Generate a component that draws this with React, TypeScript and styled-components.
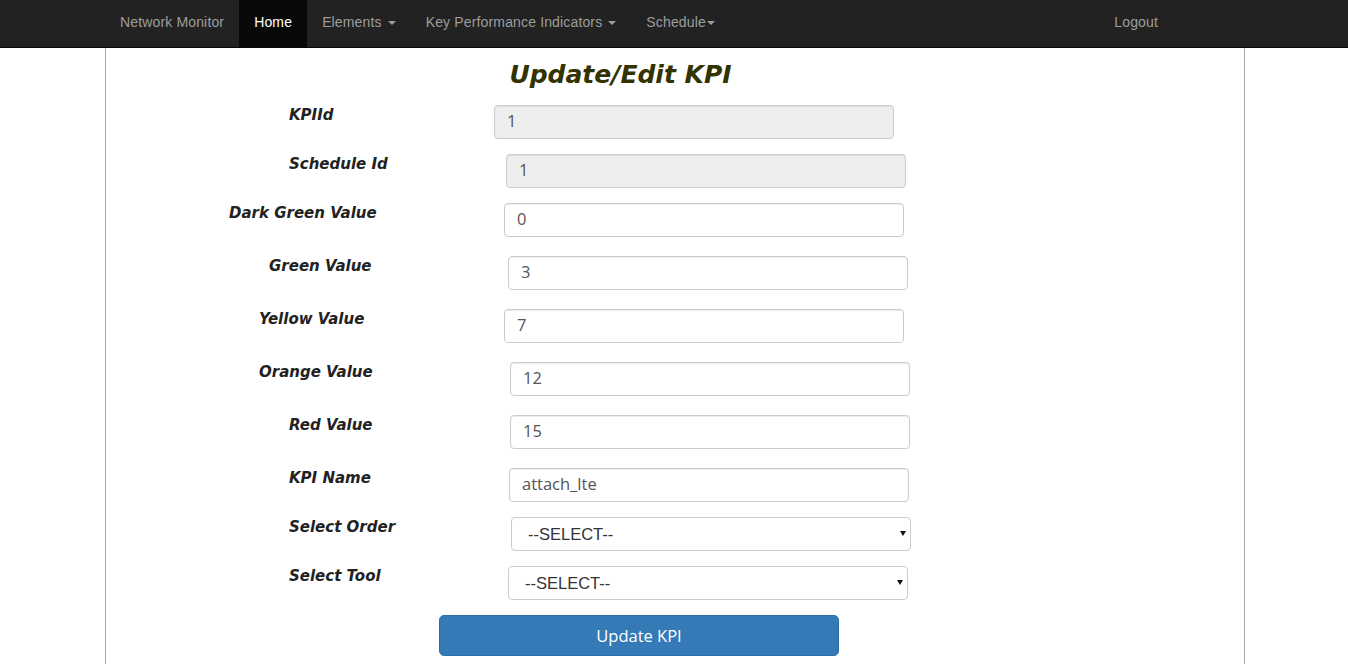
import styled, { createGlobalStyle } from "styled-components";

const GlobalStyle = createGlobalStyle`
  html, body {
    margin: 0;
    padding: 0;
    background: #fff;
    font-family: "Liberation Sans", Arial, sans-serif;
    font-size: 14px;
    color: #333;
  }
  * { box-sizing: border-box; }
`;

const Navbar = styled.nav`
  height: 48px;
  background: #222;
  border-bottom: 1px solid #080808;
`;

const NavInner = styled.div`
  width: 1140px;
  margin-left: calc(50% - 569px);
  display: flex;
  height: 47px;
`;

const NavList = styled.ul`
  list-style: none;
  margin: 0;
  padding: 0;
  display: flex;
`;

const NavRight = styled(NavList)`
  margin-left: auto;
  margin-right: 72px;
`;

const NavLink = styled.a<{ $active?: boolean }>`
  display: flex;
  align-items: center;
  height: 47px;
  padding: 0 15px 4px;
  font-size: 14px;
  letter-spacing: 0.15px;
  text-decoration: none;
  color: ${p => (p.$active ? "#fff" : "#9d9d9d")};
  background: ${p => (p.$active ? "#080808" : "transparent")};
  cursor: pointer;
`;

const Caret = styled.span<{ $tight?: boolean }>`
  display: inline-block;
  width: 0;
  height: 0;
  margin-left: ${p => (p.$tight ? "1px" : "6px")};
  margin-top: 2px;
  border-top: 4px solid #9d9d9d;
  border-left: 4px solid transparent;
  border-right: 4px solid transparent;
`;

const Page = styled.main`
  width: 1140px;
  margin-left: calc(50% - 569px);
  min-height: 616px;
  border-left: 1px solid #aaa;
  border-right: 1px solid #aaa;
  padding: 14px 0 20px;
`;

const Title = styled.h2`
  margin: 0 0 17px;
  padding-right: 109px;
  text-align: center;
  font-family: "DejaVu Sans", Verdana, sans-serif;
  font-style: italic;
  font-weight: bold;
  font-size: 25px;
  line-height: 26px;
  color: #333300;
`;

const Row = styled.div<{ $space: number }>`
  display: flex;
  align-items: flex-start;
  margin-bottom: ${p => p.$space}px;
`;

const Label = styled.label<{ $left: number; $width: number }>`
  flex: 0 0 auto;
  margin-left: ${p => p.$left}px;
  width: ${p => p.$width}px;
  padding-top: 1px;
  font-family: "DejaVu Sans", Verdana, sans-serif;
  font-style: italic;
  font-weight: bold;
  font-size: 15px;
  line-height: 18px;
  color: #222;
  white-space: nowrap;
`;

const Input = styled.input`
  width: 400px;
  height: 34px;
  padding: 4px 12px 7px;
  border: 1px solid #ccc;
  border-radius: 4px;
  box-shadow: inset 0 1px 1px rgba(0, 0, 0, 0.075);
  font-family: "Open Sans", sans-serif;
  font-size: 16.5px;
  color: #555;
  background: ${p => (p.readOnly ? "#eee" : "#fff")};
  outline: none;
`;

const SelectWrap = styled.div`
  position: relative;
  width: 400px;
`;

const Select = styled.select`
  width: 400px;
  height: 34px;
  padding: 4px 16px;
  border: 1px solid #ccc;
  border-radius: 4px;
  appearance: none;
  background: #fff;
  font-family: "Liberation Sans", Arial, sans-serif;
  font-size: 16.5px;
  color: #333;
  outline: none;
`;

const SelectArrow = styled.span`
  position: absolute;
  right: 5px;
  top: 14px;
  width: 0;
  height: 0;
  border-top: 5px solid #111;
  border-left: 3px solid transparent;
  border-right: 3px solid transparent;
  pointer-events: none;
`;

const Button = styled.button`
  display: block;
  width: 400px;
  height: 41px;
  margin-left: 333px;
  border: 1px solid #2e6da4;
  border-radius: 5px;
  background: #337ab7;
  color: #fff;
  font-family: "Open Sans", sans-serif;
  font-size: 16.5px;
  cursor: pointer;
`;

const ORIGIN = 106;

interface Field {
  label: string;
  labelX: number;
  inputX: number;
  space: number;
  value?: string;
  readOnly?: boolean;
  select?: boolean;
}

const fields: Field[] = [
  { label: "KPIId", labelX: 289, inputX: 494, space: 15, value: "1", readOnly: true },
  { label: "Schedule Id", labelX: 289, inputX: 506, space: 15, value: "1", readOnly: true },
  { label: "Dark Green Value", labelX: 229, inputX: 504, space: 19, value: "0" },
  { label: "Green Value", labelX: 269, inputX: 508, space: 19, value: "3" },
  { label: "Yellow Value", labelX: 259, inputX: 504, space: 19, value: "7" },
  { label: "Orange Value", labelX: 259, inputX: 510, space: 19, value: "12" },
  { label: "Red Value", labelX: 289, inputX: 510, space: 19, value: "15" },
  { label: "KPI Name", labelX: 289, inputX: 509, space: 15, value: "attach_lte" },
  { label: "Select Order", labelX: 289, inputX: 511, space: 15, select: true },
  { label: "Select Tool", labelX: 289, inputX: 508, space: 15, select: true },
];

function App() {
  return (
    <>
      <GlobalStyle />
      <Navbar>
        <NavInner>
          <NavList>
            <li><NavLink>Network Monitor</NavLink></li>
            <li><NavLink $active>Home</NavLink></li>
            <li><NavLink>Elements <Caret /></NavLink></li>
            <li><NavLink>Key Performance Indicators <Caret /></NavLink></li>
            <li><NavLink>Schedule<Caret $tight /></NavLink></li>
          </NavList>
          <NavRight>
            <li><NavLink>Logout</NavLink></li>
          </NavRight>
        </NavInner>
      </Navbar>
      <Page>
        <Title>Update/Edit KPI</Title>
        <form onSubmit={e => e.preventDefault()}>
          {fields.map(f => (
            <Row key={f.label} $space={f.space}>
              <Label $left={f.labelX - ORIGIN} $width={f.inputX - f.labelX}>
                {f.label}
              </Label>
              {f.select ? (
                <SelectWrap>
                  <Select defaultValue="">
                    <option value="">--SELECT--</option>
                  </Select>
                  <SelectArrow />
                </SelectWrap>
              ) : (
                <Input defaultValue={f.value} readOnly={f.readOnly} />
              )}
            </Row>
          ))}
          <Button type="submit">Update KPI</Button>
        </form>
      </Page>
    </>
  );
}

export default App;
